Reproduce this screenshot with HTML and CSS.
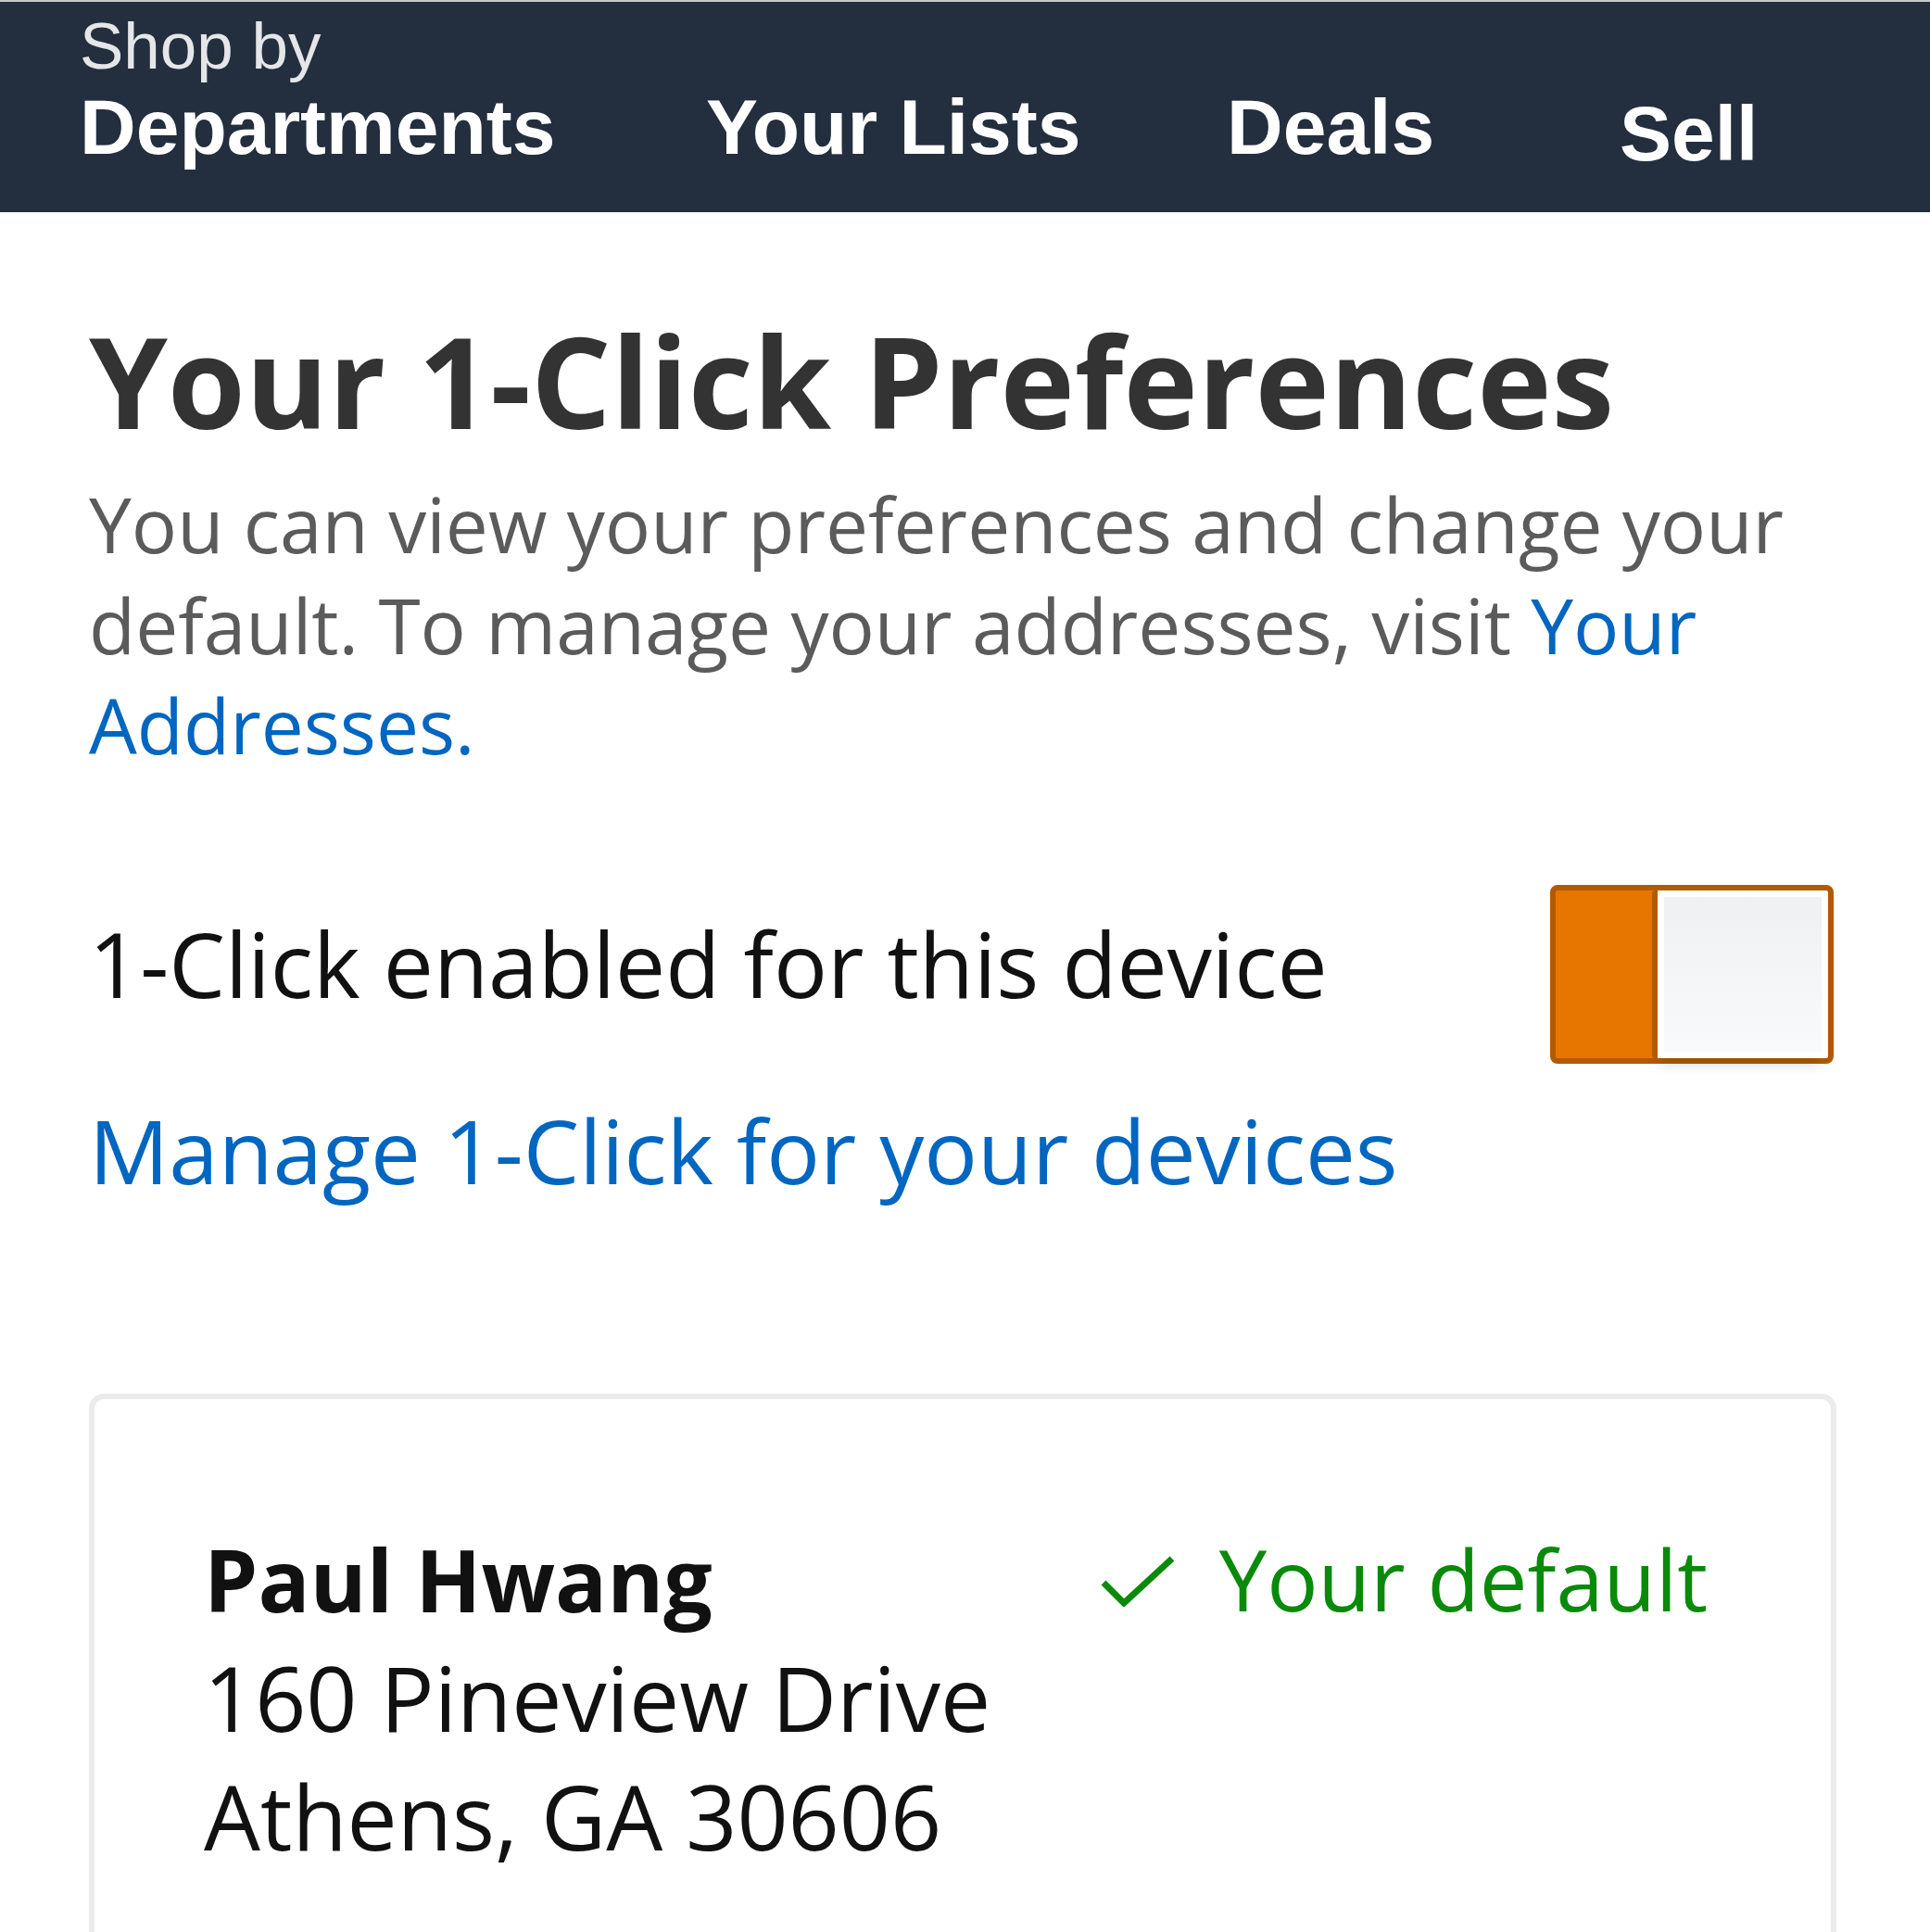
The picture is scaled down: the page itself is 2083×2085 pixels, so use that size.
FILE: index.html
```html
<!DOCTYPE html>
<html lang="en">
<head>
<meta charset="utf-8">
<title>Your 1-Click Preferences</title>
<link rel="stylesheet" href="styles.css">
</head>
<body>
<header class="nav">
  <div class="nav-item">
    <div class="nav-small">Shop by</div>
    <div class="nav-big">Departments</div>
  </div>
  <div class="nav-item"><div class="nav-big">Your Lists</div></div>
  <div class="nav-item"><div class="nav-big">Deals</div></div>
  <div class="nav-item nav-sell"><div class="nav-big">Sell</div></div>
</header>
<main class="content">
  <h1 class="title">Your 1-Click Preferences</h1>
  <p class="intro">You can view your preferences and change your default. To manage your addresses, visit <a class="link" href="#">Your Addresses.</a></p>
  <div class="setting-row">
    <span class="setting-label">1-Click enabled for this device</span>
    <div class="toggle"><div class="knob"></div></div>
  </div>
  <a class="manage-link" href="#">Manage 1-Click for your devices</a>
  <section class="card">
    <div class="address">
      <div class="name">Paul Hwang</div>
      <div class="line">160 Pineview Drive</div>
      <div class="line">Athens, GA 30606</div>
    </div>
    <div class="default">
      <svg class="check" width="82" height="56" viewBox="0 0 82 56"><polyline points="4,30 26,52 78,4" fill="none" stroke="#0a8a0a" stroke-width="7"/></svg>
      <span>Your default</span>
    </div>
  </section>
</main>
</body>
</html>
```
FILE: styles.css
```css
* { box-sizing: border-box; }
html, body { margin: 0; padding: 0; background: #fff; }
body { font-family: "Open Sans", "Noto Sans", sans-serif; }

.nav {
  height: 229px;
  background: #232f3e;
  border-top: 2px solid #c9c9c9;
  padding: 12px 0 0 86px;
  display: grid;
  grid-template-columns: 676px 562px 424px auto;
  align-items: end;
  align-content: start;
  font-family: "Liberation Sans", Arial, sans-serif;
  color: #fff;
}
.nav-small {
  font-size: 71px;
  line-height: 71px;
  color: #e4e6e8;
  margin-bottom: 11px;
}
.nav-big {
  font-size: 84px;
  line-height: 82px;
  font-weight: 700;
  white-space: nowrap;
}
.nav-sell { margin-bottom: -7px; }

.content { padding: 0 101px 0 96px; }

.title {
  margin: 100px 0 0;
  font-size: 136px;
  line-height: 164px;
  font-weight: 700;
  color: #333;
  white-space: nowrap;
}
.intro {
  margin: 18px 0 0;
  font-size: 82px;
  line-height: 108.5px;
  color: #5b5b5b;
}
.link, .manage-link { color: #0066c0; text-decoration: none; }

.setting-row {
  margin-top: 118px;
  display: flex;
  justify-content: space-between;
  align-items: flex-start;
}
.setting-label {
  margin-top: 20px;
  font-size: 96.5px;
  line-height: 130px;
  color: #111;
}
.toggle {
  width: 306px;
  height: 193px;
  margin-right: 3px;
  border: 6px solid #b25a00;
  border-radius: 8px;
  background: #e77600;
  display: flex;
  justify-content: flex-end;
}
.knob {
  width: 190px;
  height: 100%;
  border-left: 6px solid #b25a00;
  border-radius: 3px;
  background: linear-gradient(#eef0f2, #f9fafb);
  box-shadow: inset 0 0 0 7px #fff, 0 16px 12px -8px rgba(0,0,0,0.12);
}

.manage-link {
  display: block;
  margin-top: 28px;
  font-size: 96px;
  line-height: 130px;
}

.card {
  margin-top: 198px;
  min-height: 760px;
  border: 6px solid #ebebeb;
  border-radius: 16px;
  padding: 130px 133px 0 118px;
  display: flex;
  justify-content: space-between;
  align-items: flex-start;
  font-size: 96.5px;
  line-height: 128px;
  color: #111;
}
.name { font-weight: 700; font-size: 93px; }
.default {
  display: flex;
  align-items: center;
  gap: 47px;
  color: #0a8a0a;
  font-size: 92px;
}
.check { display: block; margin-top: 4px; }
```
